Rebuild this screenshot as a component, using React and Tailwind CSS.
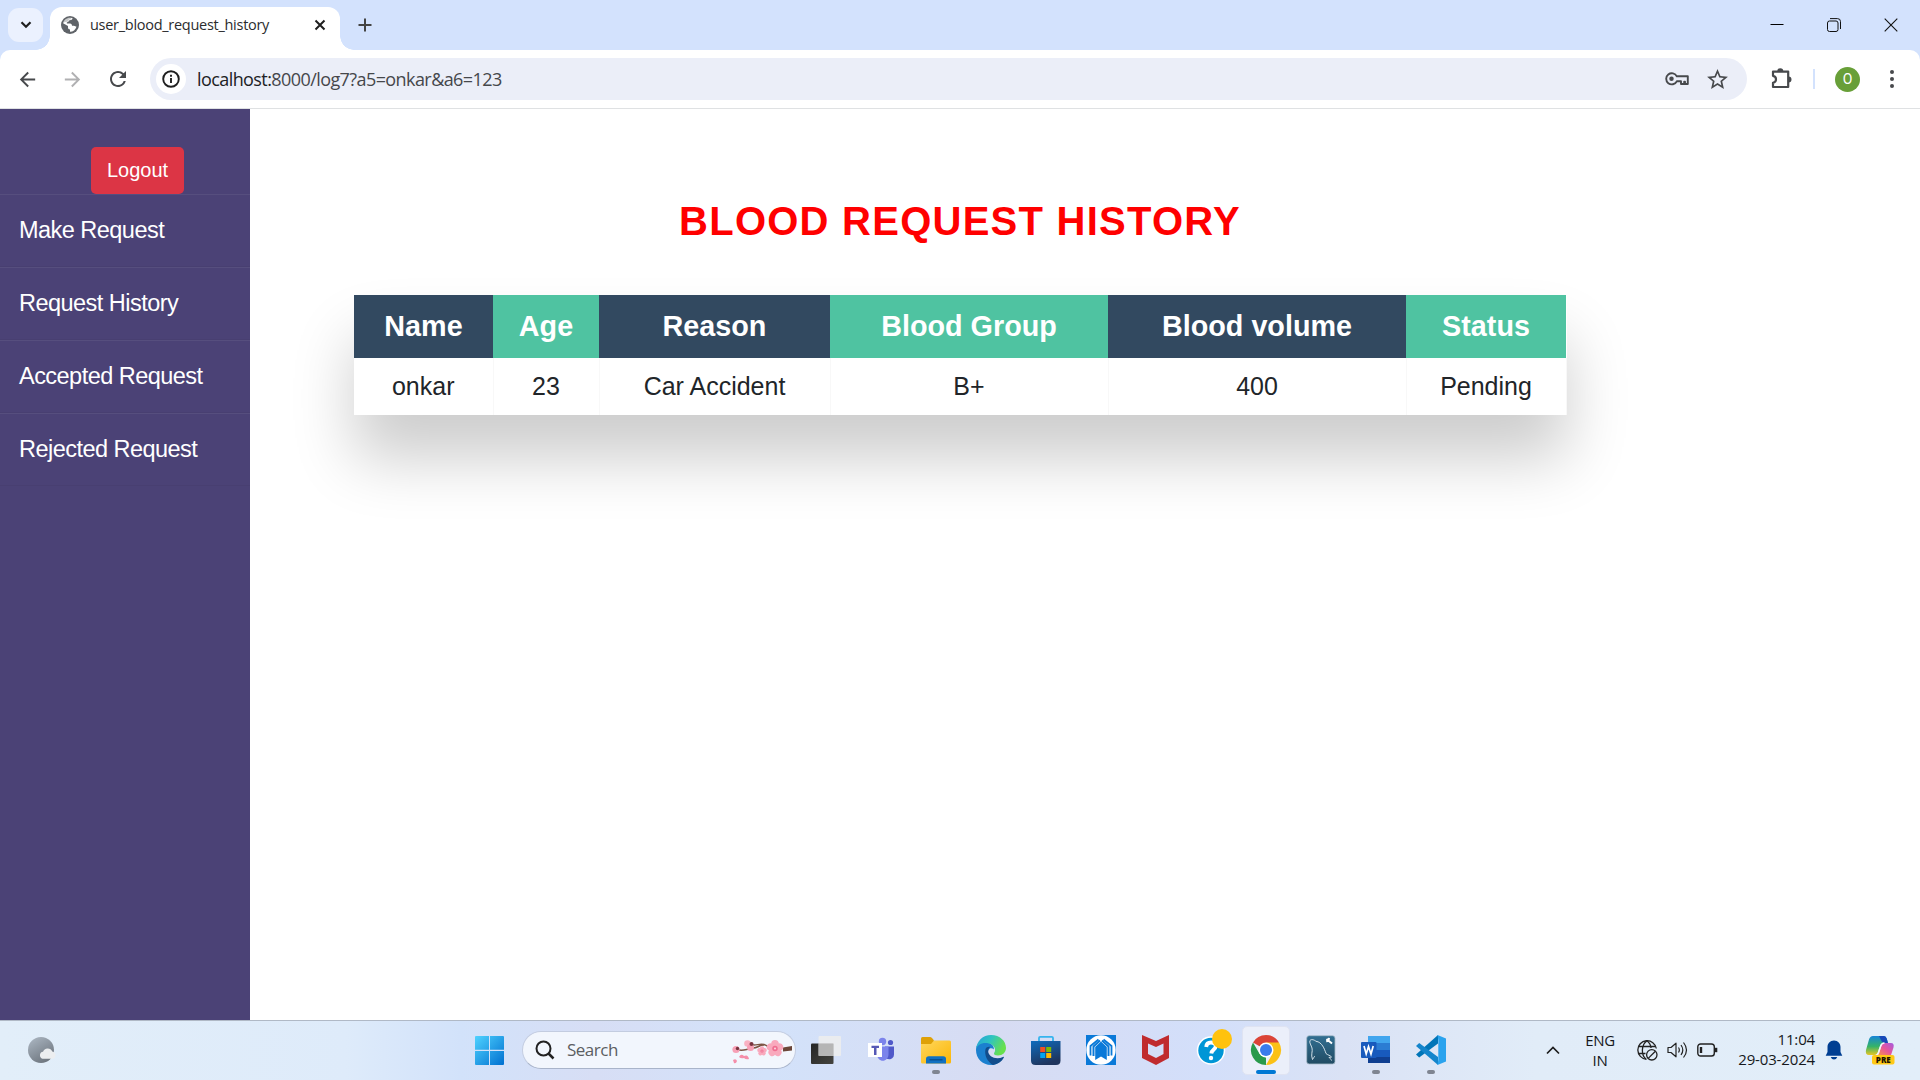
import React from "react";
import { MdArrowBack, MdArrowForward, MdStarBorder, MdRefresh } from "react-icons/md";

const COLUMNS = [
  { title: "Name", value: "onkar", cell: "w-[139px]" },
  { title: "Age", value: "23", cell: "w-[106px]" },
  { title: "Reason", value: "Car Accident", cell: "w-[231px]" },
  { title: "Blood Group", value: "B+", cell: "w-[278px]" },
  { title: "Blood volume", value: "400", cell: "w-[298px]" },
  { title: "Status", value: "Pending", cell: "w-[160px]" },
];

const LINKS = ["Make Request", "Request History", "Accepted Request", "Rejected Request"];

function TabStrip() {
  return (
    <header className="flex h-[50px] items-start bg-[#d3e2fd]">
      <button className="mt-2 ml-2 flex h-[34px] w-[35px] items-center justify-center rounded-[11px] bg-[#ebf1fe]">
        <svg width="12" height="8" viewBox="0 0 12 8" fill="none" stroke="#1f1f1f" strokeWidth="2.2">
          <path d="M1.5 1.2 6 5.7l4.500-4.500" />
        </svg>
      </button>
      <div className="relative mt-[7px] ml-[7px] flex h-[43px] w-[290px] items-center rounded-t-[12px] bg-white pb-[7px]">
        <span className="absolute bottom-0 -left-[14px] size-[14px] bg-[radial-gradient(circle_at_0_0,transparent_13.5px,white_14px)]" />
        <span className="absolute -right-[14px] bottom-0 size-[14px] bg-[radial-gradient(circle_at_100%_0,transparent_13.5px,white_14px)]" />
        <svg className="ml-[11px]" width="18" height="18" viewBox="0 0 18 18">
          <circle cx="9" cy="9" r="9" fill="#5f6368" />
          <path d="M11.500 2c0 1.500-1 2.200-2.700 2.200-1.300 0-.8 1.500-2 1.800-1 .2-1.300.8-.8 1.500H9c1.500 0 2 1 2 2.300h1.800c1.300 0 1.700.8 2.700 1-1 3-3.500 5-6.500 5v-2.300c-1.300 0-2-.8-2-2V10L2.100 7.300C2.800 4 5.500 1.700 9 1.700z" fill="#fff" />
          <path d="M9 1.200a7.800 7.800 0 0 0-6.800 5.400L7 5.600l1-2.200 2.500-.2z" fill="#5f6368" opacity=".35" />
        </svg>
        <span className="ml-[11px] w-[190px] text-[14.500px] tracking-[-0.28px] whitespace-nowrap text-[#2b2c2e]">user_blood_request_history</span>
        <svg className="ml-[34px]" width="12" height="12" viewBox="0 0 12 12" stroke="#1f1f1f" strokeWidth="2">
          <path d="M1.500 1.500l9 9M10.500 1.500l-9 9" />
        </svg>
      </div>
      <svg className="mt-[18px] ml-[18px]" width="14" height="14" viewBox="0 0 14 14" stroke="#444" strokeWidth="2">
        <path d="M7 .5v13M.5 7h13" />
      </svg>
      <div className="mr-[22px] ml-auto flex h-[50px] items-center gap-[43px]">
        <svg width="14" height="14" viewBox="0 0 14 14" stroke="#000"><path d="M.5 6.500h13" /></svg>
        <svg width="14" height="14" viewBox="0 0 14 14" fill="none" stroke="#111" className="mb-px">
          <rect x=".5" y="3" width="10.500" height="10.500" rx="2" />
          <path d="M3 .6h7.500a3 3 0 0 1 3 3V11" />
        </svg>
        <svg width="14" height="14" viewBox="0 0 14 14" stroke="#111" strokeWidth="1.1" className="mb-px"><path d="m.7.7 12.600 12.600M13.300.7.7 13.300" /></svg>
      </div>
    </header>
  );
}

function Toolbar() {
  return (
    <div className="bg-[#d3e2fd]">
      <div className="flex h-[59px] items-center rounded-t-[10px] border-b border-[#dfe1e3] bg-white">
        <MdArrowBack className="ml-4 size-[23px] text-[#47494c]" />
        <MdArrowForward className="ml-[22px] size-[23px] text-[#b0b0b2]" />
        <MdRefresh className="ml-[22px] size-[24px] text-[#47494c]" />
        <div className="ml-[20px] flex h-[42px] w-[1597px] items-center rounded-full bg-[#ebeef8]">
          <span className="ml-[6px] flex size-[30px] items-center justify-center rounded-full bg-white">
            <svg width="18" height="18" viewBox="0 0 18 18" fill="none" stroke="#1f1f1f" strokeWidth="1.900">
              <circle cx="9" cy="9" r="7.800" />
              <path d="M9 8v5M9 4.700v2" />
            </svg>
          </span>
          <span className="ml-[11px] text-[18px] tracking-[-0.58px] text-[#45474b]">
            <span className="text-[#202124]">localhost:</span>8000/log7?a5=onkar&amp;a6=123
          </span>
          <svg className="ml-auto" width="24" height="14" viewBox="0 0 24 14" fill="none" stroke="#47494c" strokeWidth="1.900">
            <path d="M11.800 4.300A5.600 5.600 0 1 0 11.800 9.300H16V12h3.200V9.600h.8V12h2.800V4.300z" strokeLinejoin="round" />
            <circle cx="6.500" cy="6.800" r="1.300" fill="#47494c" />
          </svg>
          <MdStarBorder className="mr-[17px] ml-4 size-[25px] text-[#47494c]" />
        </div>
        <svg className="mb-px ml-[23px]" width="23" height="22" viewBox="0 0 23 22">
          <path d="M3 3.600h15.200V19H3v-4.200c4-.6 4-6.300 0-7z" fill="none" stroke="#47494c" strokeWidth="2.200" strokeLinejoin="round" />
          <path d="M7.300 3.200a3 3 0 0 1 6 0M18.500 8.400a3 3 0 0 1 0 6" fill="#47494c" />
        </svg>
        <span className="ml-[20px] h-5 w-[2px] bg-[#d3e2fd]" />
        <span className="ml-[20px] flex size-[25px] items-center justify-center rounded-full bg-[#689f38] font-[Roboto] text-[14px] text-white">O</span>
        <svg className="ml-[29px]" width="6" height="20" viewBox="0 0 6 20" fill="#47494c">
          <circle cx="3" cy="3" r="2" /><circle cx="3" cy="10" r="2" /><circle cx="3" cy="17" r="2" />
        </svg>
      </div>
    </div>
  );
}

function Sidebar() {
  return (
    <nav className="w-[250px] shrink-0 bg-[#4b4276] text-white">
      <div className="flex h-[85px] pt-[38px] pl-[91px]">
        <button className="h-[47px] w-[93px] rounded-[5px] bg-[#dc3545] pb-[2px] text-[20px]">Logout</button>
      </div>
      {LINKS.map((label) => (
        <a key={label} className="block h-[73px] border-t border-b border-t-[#564e7e] border-b-[#483f71] pt-[18px] pl-[19px] text-[23.500px] leading-[34px] tracking-[-0.53px]">
          {label}
        </a>
      ))}
    </nav>
  );
}

function History() {
  return (
    <main className="flex grow flex-col items-start bg-white pl-[104px]">
      <h1 className="mt-[87px] w-[1212px] text-center text-[40px] leading-[50px] font-bold tracking-[1.25px] text-[#ff0000]">
        BLOOD REQUEST HISTORY
      </h1>
      <table className="mt-[49px] w-[1212px] table-fixed border-collapse text-center shadow-[0_43.75px_62.5px_rgba(0,0,0,0.2)]">
        <thead>
          <tr className="h-[63px] text-[28.750px] text-white">
            {COLUMNS.map((c, i) => (
              <th key={c.title} className={`${c.cell} ${i % 2 ? "bg-[#4fc3a1]" : "bg-[#324960]"} p-0 font-bold`}>
                {c.title}
              </th>
            ))}
          </tr>
        </thead>
        <tbody>
          <tr className="h-[57px] bg-white text-[25px] text-[#212529]">
            {COLUMNS.map((c) => (
              <td key={c.title} className="border-r border-[#f8f8f8] p-0">{c.value}</td>
            ))}
          </tr>
        </tbody>
      </table>
    </main>
  );
}

function Slot({ children, mark }) {
  return (
    <div className="relative flex h-full w-[55px] items-center pl-3">
      {mark === "active" && <span className="absolute top-[5px] left-[3px] h-[49px] w-[48px] rounded-[5px] border border-[#dfe3f2] bg-[#ebeffa]" />}
      <svg className="relative overflow-visible" width="30" height="30" viewBox="0 0 30 30">{children}</svg>
      {mark === "open" && <span className="absolute bottom-[5px] left-[23px] h-1 w-2 rounded-full bg-[#7f8591]" />}
      {mark === "active" && <span className="absolute bottom-[5px] left-[17px] h-1 w-5 rounded-full bg-[#0078d4]" />}
    </div>
  );
}

function Blossom({ x, y, s }) {
  return (
    <g transform={`translate(${x} ${y}) scale(${s})`}>
      {[0, 72, 144, 216, 288].map((a) => (
        <circle key={a} cx="0" cy="-4.500" r="3.600" fill="#f9a9bd" transform={`rotate(${a})`} />
      ))}
      <circle r="2.600" fill="#ef6f92" />
      <circle r="1" fill="#fbd3dc" />
    </g>
  );
}

function SearchBox() {
  return (
    <div className="ml-[18px] flex h-[38px] w-[274px] items-center rounded-full border border-[#c3cce0] border-b-[#a9b4ca] bg-[#f2f6fd]">
      <svg className="ml-[12px]" width="20" height="20" viewBox="0 0 20 20" fill="none" stroke="#222" strokeWidth="2">
        <circle cx="8.500" cy="8.500" r="7" />
        <path d="m13.500 13.500 5 5" strokeWidth="2.500" />
      </svg>
      <span className="ml-[12px] text-[17px] tracking-[-0.5px] text-[#5c5e62]">Search</span>
      <svg className="mt-1 mr-[2px] ml-auto" width="62" height="26" viewBox="0 0 62 26">
        <path d="M6 10.500c6 2 9-.5 15-1M20 5.500c5 2 8-1.500 13 0s4 4 10 4M22 9c5 0 6-3 11-3" fill="none" stroke="#7d5545" strokeWidth="1.500" />
        <path d="M52 8.500 61 7v4.500l-9 1z" fill="#6b4638" />
        <Blossom x={44} y={9.500} s={1.050} />
        <Blossom x={31} y={12} s={0.600} />
        <circle cx="5" cy="10.500" r="3.600" fill="#f7a0b6" /><circle cx="6.500" cy="9.500" r="1.700" fill="#78343f" />
        <circle cx="16.500" cy="4.500" r="3.300" fill="#f9b2c3" /><circle cx="19.500" cy="8.500" r="3.500" fill="#f7a0b6" /><circle cx="20.500" cy="5" r="2" fill="#78343f" />
        <path d="M8 18q2-4 5-1 4-2 5 3-3 1-5-1-3 1-5-1M2 21q3-2 4 1-1 3-3 2z" fill="#f58eaa" />
      </svg>
    </div>
  );
}

function TaskIcons() {
  return (
    <>
      <Slot>
        <defs>
          <linearGradient id="dark" x2="1" y2="1"><stop stopColor="#252525" /><stop offset="1" stopColor="#44443f" /></linearGradient>
          <linearGradient id="folder" x2="1" y2="1"><stop stopColor="#ffd75e" /><stop offset="1" stopColor="#fbb606" /></linearGradient>
          <linearGradient id="edgeTop" x2="1" y2=".4"><stop stopColor="#269fdc" /><stop offset=".5" stopColor="#2fc4c0" /><stop offset="1" stopColor="#67e04d" /></linearGradient>
          <linearGradient id="store" x2=".4" y2="1"><stop stopColor="#0f6cbd" /><stop offset="1" stopColor="#1f355e" /></linearGradient>
          <linearGradient id="mysql" x2="0" y2="1"><stop stopColor="#326f92" /><stop offset="1" stopColor="#214b63" /></linearGradient>
        </defs>
        <rect y="8.500" width="22.500" height="20.500" rx="1" fill="url(#dark)" />
        <rect x="7.500" y="1" width="22.500" height="20" rx="1" fill="#ededed" fillOpacity=".85" />
        <path d="M7.500 8.500h15V21h-15z" fill="#a9a9a9" fillOpacity=".7" />
      </Slot>
      <Slot>
        <circle cx="16.500" cy="6.500" r="3.700" fill="#7b83eb" />
        <circle cx="24.500" cy="7.500" r="2.600" fill="#5059c9" />
        <path d="M19 11.500h9V19c0 6-6 6-9 4z" fill="#5059c9" />
        <path d="M11 11.500h11.500V19c0 9-11.500 9-11.500 0z" fill="#7b83eb" />
        <path d="M2 8h14v14H2z" fill="#fff" />
        <path d="M5.500 10.800H13V13h-2.500v7H8v-7H5.500z" fill="#5558b5" />
      </Slot>
      <Slot mark="open">
        <path d="M0 3.500Q0 2 1.500 2H9q1 0 2 1l2 2.500V12H0z" fill="#dfa107" />
        <path d="M0 9h10l3-3.500h15.500Q30 5.500 30 7v20q0 1.500-1.500 1.500h-27Q0 28.500 0 27z" fill="url(#folder)" />
        <path d="M5 28.500V24q0-2.800 2.800-2.800h14.400q2.800 0 2.800 2.800v4.500z" fill="#1171c1" />
        <path d="M8.500 24.800h13" stroke="#084a86" strokeWidth="1.200" />
      </Slot>
      <Slot>
        <path d="M0 15C0 9 4 7 9 7c6 0 9 4 9 7.500 0 0-3-3-5.500.5C10 20 14 24 20 24c3 0 5-.8 7.500-1.800C25 27 20.500 30 15 30 6.500 30 0 23.500 0 15z" fill="#1b80cf" />
        <path d="M9.500 14c-1.500 6 2 13 7.500 16 5-.8 8.500-3.500 10.800-7.300.3-.8-.2-1-.8-.7C20 25.200 12 21.500 12.200 16c.1-3 2-4 2-4-2-.5-4 .5-4.700 2z" fill="#124d8c" />
        <path d="M0 14.500C.5 6 7 0 15 0c9 0 15 6 15 13 0 4.500-3.500 7.500-8 7.500-3 0-4-1-4-2s1.500-1.800 1-4.500C18.200 10 14 8 9.500 8 4.500 8 1 10.500 0 14.500z" fill="url(#edgeTop)" />
      </Slot>
      <Slot>
        <path d="M8 7V3q0-1.200 1.200-1.200h11.600Q22 1.800 22 3v4" fill="none" stroke="#36b4ee" strokeWidth="1.800" />
        <path d="M0 6h29.500v19.500q0 4.500-4.500 4.500H4.500Q0 30 0 25.500z" fill="url(#store)" />
        <path d="M9.200 12h5v5h-5z" fill="#f25022" /><path d="M15.200 12h5v5h-5z" fill="#7fba00" />
        <path d="M9.200 18h5v5h-5z" fill="#00a4ef" /><path d="M15.200 18h5v5h-5z" fill="#ffb900" />
      </Slot>
      <Slot>
        <path d="M0 0h30v30H0z" fill="#0a79d8" />
        <circle cx="15" cy="15" r="14.700" fill="#fff" />
        <path d="M4.500 20.500V11l8-6.500M25.500 20.500V11l-8-6.500" fill="none" stroke="#0a79d8" strokeWidth="1.800" />
        <path d="m14 5.500-6.500 6V21M16 5.500l6.500 6V21" fill="none" stroke="#0a79d8" strokeWidth="2" />
        <path d="m15 6.500 5.800 5.500v13L15 21.500 9.200 25V12z" fill="#0a79d8" />
      </Slot>
      <Slot>
        <path fillRule="evenodd" d="M1 0 15 6l13-6v23L15 30 1 23zM7 8.500V19l8 4 7.500-4V8.500L15 12z" fill="#c02b2e" />
      </Slot>
      <Slot>
        <circle cx="15" cy="15.500" r="14.200" fill="#fff" /><circle cx="15" cy="15.500" r="12.700" fill="#0096d6" />
        <path d="M10.200 12q.3-4.500 4.800-4.500 4.700 0 4.700 3.800c0 3.200-4 3.200-4.400 7.200" fill="none" stroke="#fff" strokeWidth="3.800" />
        <circle cx="15" cy="23" r="2.200" fill="#fff" />
        <circle cx="26" cy="4" r="10" fill="#ffc20e" />
      </Slot>
      <Slot mark="active">
        <path d="M15 15 2 7.500A15 15 0 0 1 28 7.500z" fill="#db4437" />
        <path d="M2 7.500 8.500 18.800 15 22.500V30A15 15 0 0 1 2 7.500z" fill="#299a4b" />
        <path d="M15 7.500h13A15 15 0 0 1 15 30l6.500-11.200z" fill="#fbc116" />
        <circle cx="15" cy="15" r="7.500" fill="#fff" /><circle cx="15" cy="15" r="6" fill="#3a7cec" />
      </Slot>
      <Slot>
        <rect x=".7" y=".7" width="28.300" height="28.300" rx="2.500" fill="url(#mysql)" stroke="#a9bdca" strokeWidth=".8" />
        <path d="M6.500 24.500c-2-5 .5-8-.5-11.500C5.300 10.500 3 7.500 4 5.500c1.500-1.800 4.500-.5 6 .8C16 7 18.500 14 20 18.500c1.500 1.500 4.500 2 5.500 3.500-1 .3-2 .3-2.500.5.500 1 2.500 1.500 2.500 3M6.500 24.500c1-1 1.500-3 2.500-3.500" fill="none" stroke="#d4e1e9" strokeWidth="1" strokeLinejoin="round" />
        <path d="m20.500 4 5.500 4.500M23 2.800l-.5 3-2.300.4" stroke="#fff" strokeWidth="2" fill="none" />
      </Slot>
      <Slot mark="open">
        <path d="M7 1h22v7H7z" fill="#41a5ee" /><path d="M7 8h22v7H7z" fill="#2b7cd3" />
        <path d="M7 15h22v7H7z" fill="#185abd" /><path d="M7 22h22v6H7z" fill="#103f91" />
        <rect y="7" width="15.500" height="16" rx="1" fill="#185abd" />
        <path d="m3 11 2.200 8 2.300-7.500L10 19l2.200-8" fill="none" stroke="#fff" strokeWidth="1.700" />
      </Slot>
      <Slot mark="open">
        <path d="M22 0 0 19.500l3.200 3L22 8.500z" fill="#0075b8" />
        <path d="M22 30 0 11l3.200-3L22 22z" fill="#1485cc" />
        <path d="m21.500 0 8.500 3.500v23L21.500 30l.8-5V5z" fill="#2aa3ee" />
      </Slot>
    </>
  );
}

function Tray() {
  return (
    <div className="ml-auto flex h-full items-center text-[15px] leading-5 text-[#16181c]">
      <svg width="14" height="9" viewBox="0 0 14 9" fill="none" stroke="#1c1c1c" strokeWidth="1.700"><path d="m1 7.500 6-6 6 6" /></svg>
      <div className="ml-[22px] w-[36px] pb-px text-center tracking-[-0.3px]">ENG<br />IN</div>
      <svg className="ml-[19px]" width="21" height="21" viewBox="0 0 21 21" fill="none" stroke="#222" strokeWidth="1.300">
        <path d="M19.300 8.500A9.300 9.300 0 1 0 9.500 19.300" />
        <path d="M10 .8C4 5 4 15 9 19M10 .8c2.500 2 3.800 4.500 4 7.200M1.500 6.500h17M1.500 13.500h7" />
        <circle cx="14.800" cy="14.800" r="5.200" /><path d="m11.200 18.400 7.200-7.200" />
      </svg>
      <svg className="ml-[9px]" width="21" height="18" viewBox="0 0 21 18" fill="none" stroke="#222" strokeWidth="1.200">
        <path d="M1 6.500h3l5-4.300v13.600l-5-4.300H1z" strokeLinejoin="round" />
        <path d="M11.500 6.500q1.700 2.500 0 5M14 4q3.600 5 0 10M16.500 1.500q6 7.500 0 15" />
      </svg>
      <svg className="ml-[9px]" width="21" height="14" viewBox="0 0 21 14" fill="none" stroke="#222" strokeWidth="1.400">
        <rect x=".8" y="1" width="16.500" height="12" rx="2.800" />
        <path d="M19 4.800v4.400" strokeWidth="2.600" /><path d="M4 4v6" strokeWidth="2.400" />
      </svg>
      <div className="ml-[17px] w-[80px] pb-[3px] text-right tracking-[-0.15px]">11:04<br />29-03-2024</div>
      <svg className="ml-[10px]" width="18" height="20" viewBox="0 0 18 20" fill="#003e92">
        <path d="M9 .5c-4 0-6.500 3-6.500 6.500v5L.7 15.700h16.600L15.500 12V7C15.500 3.500 13 .5 9 .5zM5.700 17h6.600q-1 2.500-3.300 2.500T5.700 17z" />
      </svg>
      <svg className="mr-[25px] ml-[22px]" width="30" height="30" viewBox="0 0 30 30">
        <defs>
          <linearGradient id="cpl" x2="0" y2="1"><stop stopColor="#1784d8" /><stop offset=".55" stopColor="#35b368" /><stop offset="1" stopColor="#e7c626" /></linearGradient>
          <linearGradient id="cpr" x1="1" x2="0" y2="1"><stop stopColor="#a45be0" /><stop offset=".5" stopColor="#e5559c" /><stop offset="1" stopColor="#f7934c" /></linearGradient>
        </defs>
        <path d="M8 1h11q2 0 2.700 2.500L23 8h-4q-3 0-4 3l-2.500 7q-.8 2-3 2H4q-4 0-3-5L4 4.500Q5 1 8 1z" fill="url(#cpl)" />
        <path d="M14 1h5q2 0 2.700 2.500L23 8h-3q-3 0-4-3z" fill="#1848b8" />
        <path d="M19 8h7q3.500 0 2.500 4.500L26 20H12q1.500 0 2-2l2.500-7.500Q17.200 8 19 8z" fill="url(#cpr)" />
        <path d="M19.500 8q-2.800 0-3.800 3l-2.300 7q-.6 1.700-2 2" fill="none" stroke="#f4f4fa" strokeWidth="1.500" />
        <rect x="7" y="20" width="22.500" height="9.500" rx="2" fill="#ffc917" />
        <text x="18.300" y="27.600" textAnchor="middle" fontSize="8" fontWeight="800" fill="#1c1600">PRE</text>
      </svg>
    </div>
  );
}

function Taskbar() {
  return (
    <footer className="flex h-[60px] items-center border-t border-[#b0b9c6] bg-[linear-gradient(90deg,#e2eef9_0%,#deebfa_18%,#d2e2fa_24%,#d7def5_31%,#d3e2fa_40%,#d7dcf3_52%,#d3dffa_63%,#dae2f5_70%,#e1ecf8_80%,#e2eef9_100%)] pb-px">
      <svg className="ml-[27px]" width="30" height="28" viewBox="0 0 30 28">
        <defs><linearGradient id="moon" x2=".6" y2="1"><stop stopColor="#aeb9c5" /><stop offset="1" stopColor="#6f7780" /></linearGradient></defs>
        <circle cx="14" cy="14" r="13" fill="url(#moon)" />
        <path d="M15.500 22.800a3.600 3.600 0 0 1 .5-7 5 5 0 0 1 9.300-.4 3.800 3.800 0 0 1 .4 7.400z" fill="#eceef0" />
      </svg>
      <svg className="mt-px ml-[418px]" width="29" height="29" viewBox="0 0 29 29">
        <defs><linearGradient id="win" x2="1" y2="1"><stop stopColor="#4fd2ff" /><stop offset="1" stopColor="#0070d0" /></linearGradient></defs>
        <path d="M1 0h13v13.700H0V1q0-1 1-1zM15 0h13q1 0 1 1v12.700H15zM0 15h14v14H1q-1 0-1-1zM15 15h14v13q0 1-1 1H15z" fill="url(#win)" />
      </svg>
      <SearchBox />
      <div className="ml-[3px] flex h-full">
        <TaskIcons />
      </div>
      <Tray />
    </footer>
  );
}

export default function App() {
  return (
    <div className="flex h-[1080px] w-[1920px] flex-col overflow-hidden font-['Open_Sans',sans-serif]">
      <TabStrip />
      <Toolbar />
      <div className="flex h-[911px] font-['Liberation_Sans',Arial,sans-serif]">
        <Sidebar />
        <History />
      </div>
      <Taskbar />
    </div>
  );
}
